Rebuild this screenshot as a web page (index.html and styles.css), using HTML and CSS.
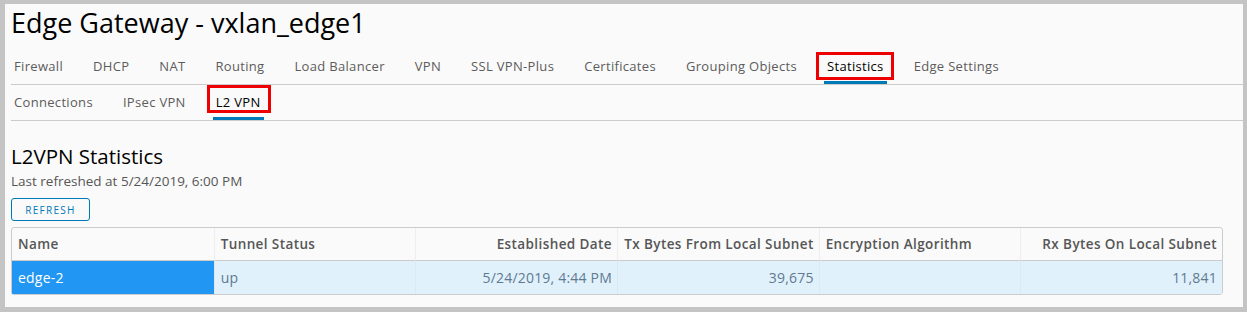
FILE: index.html
```html
<!DOCTYPE html>
<html lang="en">
<head>
<meta charset="UTF-8">
<title>Edge Gateway - vxlan_edge1</title>
<link rel="stylesheet" href="styles.css">
</head>
<body>
<div class="page">
  <h1 class="title">Edge Gateway - vxlan_edge1</h1>

  <ul class="tabs">
    <li><a class="tab">Firewall</a></li>
    <li><a class="tab">DHCP</a></li>
    <li><a class="tab">NAT</a></li>
    <li><a class="tab">Routing</a></li>
    <li><a class="tab">Load Balancer</a></li>
    <li><a class="tab">VPN</a></li>
    <li><a class="tab">SSL VPN-Plus</a></li>
    <li><a class="tab">Certificates</a></li>
    <li><a class="tab">Grouping Objects</a></li>
    <li><a class="tab active">Statistics<span class="mark mark-main"></span></a></li>
    <li><a class="tab">Edge Settings</a></li>
  </ul>

  <ul class="tabs sub-tabs">
    <li><a class="tab">Connections</a></li>
    <li><a class="tab">IPsec VPN</a></li>
    <li><a class="tab active">L2 VPN<span class="mark mark-sub"></span></a></li>
  </ul>

  <h2 class="section-title">L2VPN Statistics</h2>
  <p class="refreshed">Last refreshed at 5/24/2019, 6:00 PM</p>
  <button class="btn-outline" type="button">Refresh</button>

  <table class="grid">
    <tr>
      <th>Name</th>
      <th>Tunnel Status</th>
      <th class="num">Established Date</th>
      <th class="num">Tx Bytes From Local Subnet</th>
      <th>Encryption Algorithm</th>
      <th class="num">Rx Bytes On Local Subnet</th>
    </tr>
    <tr class="selected">
      <td class="cell-active">edge-2</td>
      <td>up</td>
      <td class="num">5/24/2019, 4:44 PM</td>
      <td class="num">39,675</td>
      <td></td>
      <td class="num">11,841</td>
    </tr>
  </table>
</div>
</body>
</html>
```

FILE: styles.css
```css
body {
  margin: 0;
  background-color: #c4c4c4;
  font-family: "Open Sans", Lato, sans-serif;
}

.page {
  margin: 4px 4px 5px 5px;
  height: 303px;
  background-color: #fafafa;
  padding: 0 20px 0 6px;
  box-sizing: border-box;
  overflow: hidden;
}

.title {
  margin: 0;
  padding-top: 3px;
  font-size: 27px;
  line-height: 32px;
  font-weight: 400;
  color: #000;
}

.tabs {
  list-style: none;
  margin: 0;
  padding: 0;
  display: flex;
  gap: 24px;
  border-bottom: 1px solid #cccccc;
  margin-top: 9px;
  margin-right: -20px;
}

.tab {
  position: relative;
  display: block;
  padding: 0 3px;
  height: 36px;
  line-height: 36px;
  font-size: 13px;
  letter-spacing: 0.32px;
  color: #5c5c5c;
}

.tab.active {
  color: #000;
  box-shadow: inset 0 -3px 0 #0079b8;
}

.sub-tabs {
  margin-top: 0;
}

.sub-tabs .tab {
  height: 35px;
  line-height: 35px;
}

/* red annotation boxes */
.mark {
  position: absolute;
  border: 3px solid #ee0000;
  box-sizing: border-box;
}

.mark-main {
  left: -8px;
  right: -7px;
  top: 4px;
  bottom: 4px;
}

.mark-sub {
  left: -6px;
  right: -7px;
  top: 0;
  bottom: 7px;
}

.section-title {
  margin: 23px 0 0;
  font-size: 20.5px;
  line-height: 24px;
  font-weight: 400;
  color: #000;
}

.refreshed {
  margin: 4px 0 0;
  font-size: 13.5px;
  line-height: 18px;
  color: #565656;
}

.btn-outline {
  display: block;
  margin-top: 8px;
  width: 79px;
  height: 23px;
  padding: 0;
  border: 1px solid #0079b8;
  border-radius: 3px;
  background: #fafafa;
  color: #0079b8;
  font-family: "Open Sans", sans-serif;
  font-size: 10px;
  letter-spacing: 1.3px;
  text-transform: uppercase;
}

.grid {
  margin-top: 6px;
  width: 1212px;
  border-collapse: separate;
  border-spacing: 0;
  border: 1px solid #cccccc;
  border-radius: 3px;
  table-layout: fixed;
  font-size: 13.5px;
}

.grid th, .grid td {
  text-align: left;
  padding: 0 5px 0 6px;
}

.grid th {
  height: 32px;
  font-weight: 600;
  letter-spacing: 0.4px;
  color: #565656;
  border-bottom: 1px solid #cccccc;
  border-left: 1px solid #eeeeee;
}

.grid td {
  height: 33px;
  font-size: 14px;
  letter-spacing: 0.2px;
  background-color: #e1f1fb;
  color: #5e7a92;
  border-left: 1px solid #dde8ef;
}

.grid th:first-child, .grid td:first-child {
  border-left: none;
}

.grid .num {
  text-align: right;
}

.grid td.cell-active {
  background-color: #2196f3;
  color: #fff;
}
```
